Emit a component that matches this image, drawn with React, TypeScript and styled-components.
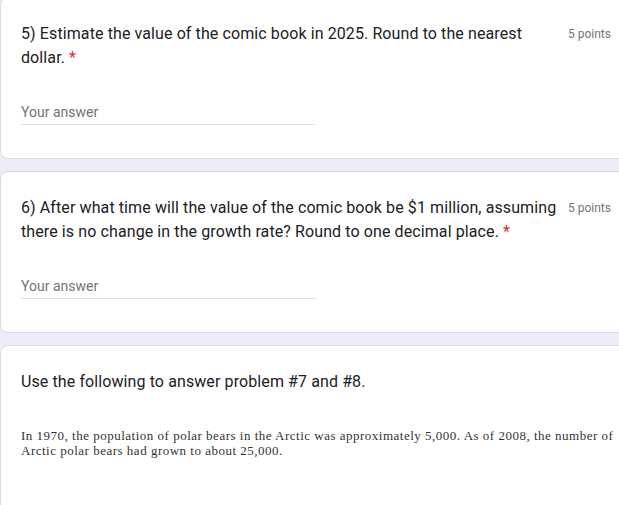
import React from 'react';
import styled, { createGlobalStyle } from 'styled-components';

const GlobalStyle = createGlobalStyle`
  html, body {
    margin: 0;
    padding: 0;
    background: #f0ebf8;
    overflow: hidden;
  }
`;

const Page = styled.div`
  width: 636px;
  margin-top: -3px;
  display: flex;
  flex-direction: column;
  gap: 12px;
  font-family: Roboto, 'Liberation Sans', Arial, sans-serif;
  color: #202124;
`;

const Card = styled.div<{ $tall?: boolean }>`
  background: #fff;
  border: 1px solid #dadce0;
  border-radius: 8px;
  padding: 24px 24px ${p => (p.$tall ? '80px' : '33px')} 20px;
`;

const Header = styled.div`
  display: flex;
  align-items: flex-start;
`;

const Title = styled.div`
  flex: 1;
  font-size: 16px;
  line-height: 24px;
  letter-spacing: 0.1px;
  color: #202124;
`;

const Required = styled.span`
  color: #d93025;
  margin-left: 4px;
`;

const Points = styled.div`
  flex: none;
  margin-left: 8px;
  font-size: 12px;
  line-height: 24px;
  color: #70757a;
`;

const AnswerField = styled.div`
  margin-top: 32px;
  width: 295px;
  padding-bottom: 2px;
  border-bottom: 1px solid #e0e0e0;
  font-size: 14px;
  line-height: 20px;
  color: #70757a;
`;

const Passage = styled.p`
  margin: 34px 0 0;
  font-family: 'Liberation Serif', 'Times New Roman', serif;
  font-size: 13px;
  line-height: 15px;
  letter-spacing: 0.5px;
  color: #333;
  width: 596px;
`;

type QuestionProps = {
  title: string;
  points: number;
};

const Question: React.FC<QuestionProps> = ({ title, points }) => (
  <Card>
    <Header>
      <Title>
        {title}
        <Required>*</Required>
      </Title>
      <Points>{points} points</Points>
    </Header>
    <AnswerField>Your answer</AnswerField>
  </Card>
);

const App: React.FC = () => (
  <>
    <GlobalStyle />
    <Page>
      <Question
        title="5) Estimate the value of the comic book in 2025. Round to the nearest dollar."
        points={5}
      />
      <Question
        title="6) After what time will the value of the comic book be $1 million, assuming there is no change in the growth rate? Round to one decimal place."
        points={5}
      />
      <Card $tall>
        <Title>Use the following to answer problem #7 and #8.</Title>
        <Passage>
          In 1970, the population of polar bears in the Arctic was approximately 5,000. As of 2008, the number of
          Arctic polar bears had grown to about 25,000.
        </Passage>
      </Card>
    </Page>
  </>
);

export default App;
